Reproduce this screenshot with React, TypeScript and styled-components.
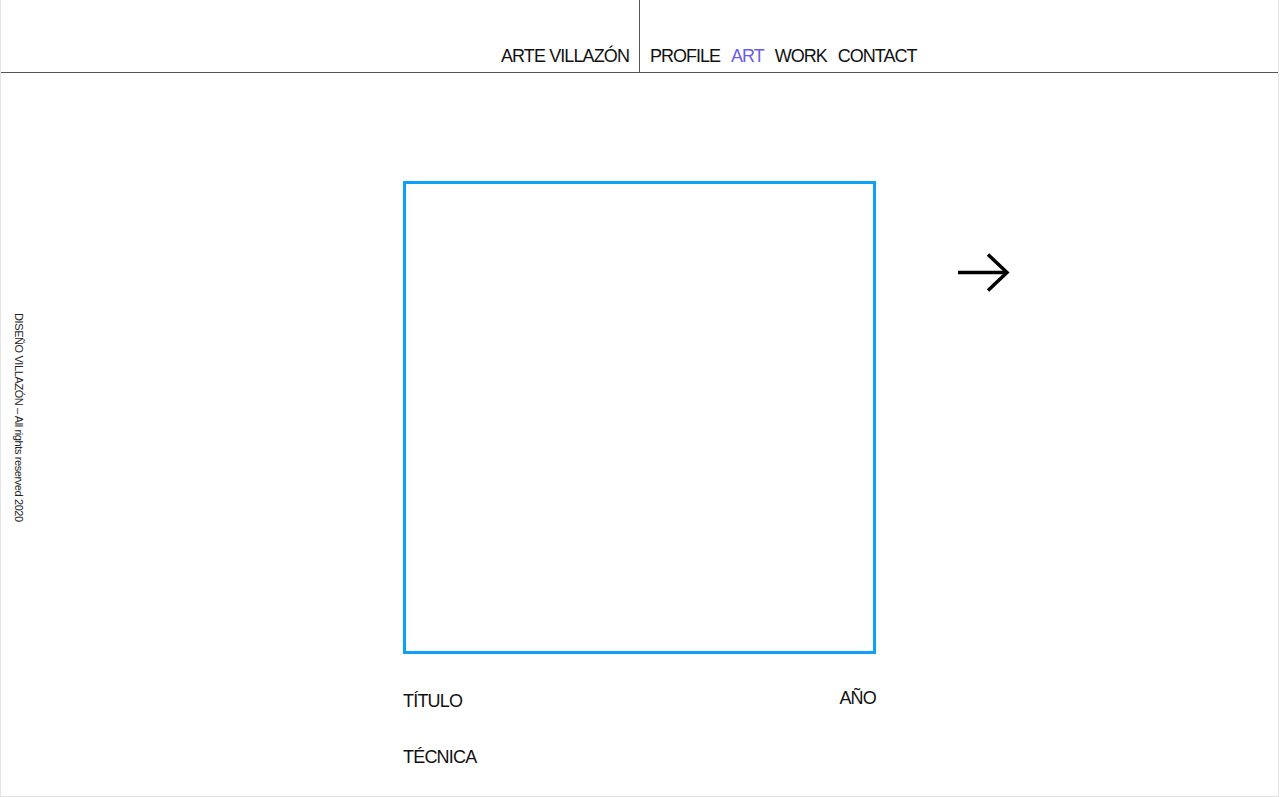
import React from "react";
import styled, { createGlobalStyle } from "styled-components";

const Global = createGlobalStyle`
  html, body { margin: 0; padding: 0; background: #ffffff; }
  body { font-family: "Liberation Sans", Arial, sans-serif; color: #111; }
  * { box-sizing: border-box; }
`;

const Page = styled.div`
  width: 1279px;
  height: 797px;
  border: 1px solid #e4e4e4;
  border-top: none;
  display: flex;
  flex-direction: column;
  overflow: hidden;
`;

const Header = styled.header`
  height: 73px;
  border-bottom: 1px solid #555;
  display: grid;
  grid-template-columns: 1fr 1px 1fr;
`;

const Brand = styled.div`
  display: flex;
  justify-content: flex-end;
  align-items: flex-end;
  padding: 0 10px 5px 0;
  font-size: 18px;
  letter-spacing: -0.9px;
  color: #111;
`;

const Divider = styled.div`
  background: #555;
`;

const Nav = styled.nav`
  display: flex;
  align-items: flex-end;
  gap: 11px;
  padding: 0 0 5px 10px;
  font-size: 18px;
  letter-spacing: -1px;
`;

const NavLink = styled.a<{ $active?: boolean }>`
  color: ${(p) => (p.$active ? "#6b5be8" : "#111")};
  text-decoration: none;
`;

const Main = styled.main`
  flex: 1;
  display: grid;
  grid-template-columns: 1fr 473px 1fr;
  padding-top: 108px;
`;

const Side = styled.div`
  display: flex;
  align-items: flex-start;
  padding-left: 12px;
`;

const SideLabel = styled.div`
  writing-mode: vertical-rl;
  font-size: 11px;
  letter-spacing: -0.4px;
  color: #222;
  height: 473px;
  display: flex;
  align-items: center;
  justify-content: center;
  text-align: center;
`;

const Center = styled.div`
  display: flex;
  flex-direction: column;
`;

const Frame = styled.div`
  width: 473px;
  height: 473px;
  border: 3px solid #0ea0f5;
`;

const CaptionRow = styled.div`
  display: flex;
  justify-content: space-between;
  align-items: flex-start;
  margin-top: 34px;
  font-size: 18px;
  letter-spacing: -0.8px;
`;

const Caption = styled.div<{ $shift?: number }>`
  margin-top: ${(p) => p.$shift ?? 0}px;
`;

const Technique = styled.div`
  margin-top: 35px;
  font-size: 18px;
  letter-spacing: -0.8px;
`;

const Right = styled.div`
  padding: 72px 0 0 81px;
`;

const ArrowBtn = styled.button`
  border: none;
  background: none;
  padding: 0;
  width: 53px;
  height: 40px;
  cursor: pointer;
  display: block;
`;

export default function App() {
  return (
    <>
      <Global />
      <Page>
        <Header>
          <Brand>ARTE VILLAZÓN</Brand>
          <Divider />
          <Nav>
            <NavLink href="#">PROFILE</NavLink>
            <NavLink href="#" $active>ART</NavLink>
            <NavLink href="#">WORK</NavLink>
            <NavLink href="#">CONTACT</NavLink>
          </Nav>
        </Header>
        <Main>
          <Side>
            <SideLabel>DISEÑO VILLAZÓN – All rights reserved 2020</SideLabel>
          </Side>
          <Center>
            <Frame />
            <CaptionRow>
              <Caption $shift={3}>TÍTULO</Caption>
              <Caption>AÑO</Caption>
            </CaptionRow>
            <Technique>TÉCNICA</Technique>
          </Center>
          <Right>
            <ArrowBtn aria-label="next">
              <svg width="53" height="40" viewBox="0 0 53 40" fill="none">
                <path d="M1 19.5H50" stroke="#000" strokeWidth="3.5" />
                <path d="M31 1.5L50 19.5L31 37.5" stroke="#000" strokeWidth="3.5" />
              </svg>
            </ArrowBtn>
          </Right>
        </Main>
      </Page>
    </>
  );
}
